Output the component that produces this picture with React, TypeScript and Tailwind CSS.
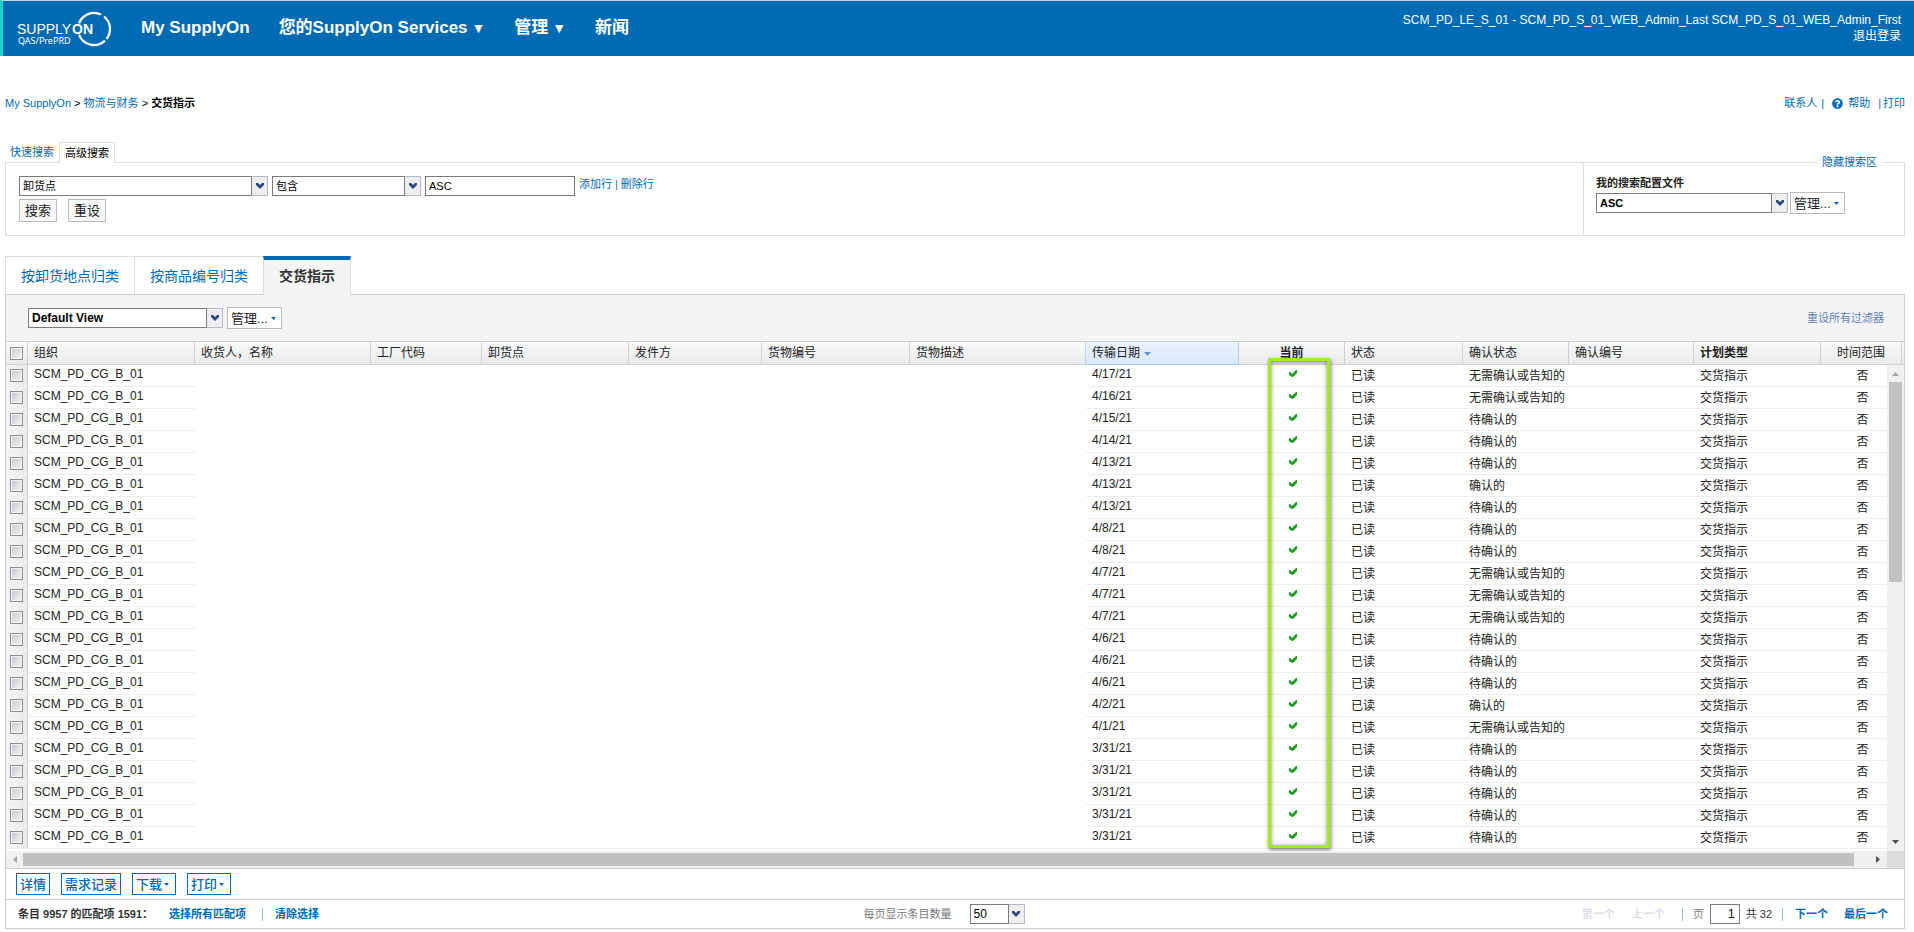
import { ReactNode } from "react";
import { FaQuestionCircle } from "react-icons/fa";

const columns = [
    { label: "组织", width: "w-[167px]" },
    { label: "收货人，名称", width: "w-[176px]" },
    { label: "工厂代码", width: "w-[111px]" },
    { label: "卸货点", width: "w-[147px]" },
    { label: "发件方", width: "w-[133px]" },
    { label: "货物编号", width: "w-[148px]" },
    { label: "货物描述", width: "" },
    { label: "传输日期", width: "w-[153px]", sorted: true },
    { label: "当前", width: "w-[106px]", center: true, bold: true },
    { label: "状态", width: "w-[118px]" },
    { label: "确认状态", width: "w-[106px]" },
    { label: "确认编号", width: "w-[125px]" },
    { label: "计划类型", width: "w-[127px]", bold: true },
    { label: "时间范围", width: "w-[81px]", center: true },
];

const NONE = "无需确认或告知的";
const PENDING = "待确认的";
const DONE = "确认的";

const rows = [
    ["4/17/21", NONE],
    ["4/16/21", NONE],
    ["4/15/21", PENDING],
    ["4/14/21", PENDING],
    ["4/13/21", PENDING],
    ["4/13/21", DONE],
    ["4/13/21", PENDING],
    ["4/8/21", PENDING],
    ["4/8/21", PENDING],
    ["4/7/21", NONE],
    ["4/7/21", NONE],
    ["4/7/21", NONE],
    ["4/6/21", PENDING],
    ["4/6/21", PENDING],
    ["4/6/21", PENDING],
    ["4/2/21", DONE],
    ["4/1/21", NONE],
    ["3/31/21", PENDING],
    ["3/31/21", PENDING],
    ["3/31/21", PENDING],
    ["3/31/21", PENDING],
    ["3/31/21", PENDING],
];

function Logo() {
    return (
        <svg width="96" height="40" viewBox="0 0 96 40" className="text-white" role="img" aria-label="SupplyOn">
            <g fill="none" stroke="currentColor" strokeWidth="2.200">
                <path d="M62 14.400 A16 16 0 0 1 84 5.600" />
                <path d="M87 7.500 A16 16 0 0 1 89.500 30" />
                <path d="M88 31.600 A16 16 0 0 1 62 25.600" />
            </g>
            <text x="0" y="25" fontSize="14" fill="currentColor">SUPPLY</text>
            <text x="55" y="25" fontSize="14" fontWeight="bold" fill="currentColor">ON</text>
            <text x="1" y="35" fontSize="9" fontFamily="Noto Sans" fill="currentColor">QAS/PrePRD</text>
        </svg>
    );
}

function Combo({ value, label, width, text }: { value: string; label: string; width: string; text: string }) {
    return (
        <div className={`relative h-5 ${width}`}>
            <select
                aria-label={label}
                className={`block h-5 w-full appearance-none border border-[#7a7a7a] bg-white pl-[3px] pr-5 leading-[18px] text-black ${text}`}
            >
                <option>{value}</option>
            </select>
            <span className="pointer-events-none absolute right-0 top-0 flex h-5 w-[17px] items-center justify-center border border-[#b5b8c8] border-l-[#7a7a7a] bg-[#eeeeee]">
                <svg width="8" height="6" viewBox="0 0 8 6" className="text-[#2b4a82]">
                    <path d="M0 0h2l2 2 2-2h2v2L4 6 0 2z" fill="currentColor" />
                </svg>
            </span>
        </div>
    );
}

function Caret({ className }: { className: string }) {
    return (
        <svg width="5" height="3" viewBox="0 0 5 3" className={className}>
            <path d="M0 0h5L2.500 3z" fill="currentColor" />
        </svg>
    );
}

function ManageButton() {
    return (
        <button className="flex h-[22px] w-[55px] items-center border border-[#bbbbbb] bg-white pl-[3px] pt-[2px] text-[13px] leading-[18px] text-[#222222]">
            管理...
            <Caret className="mb-[2px] ml-[3px] text-[#006ab3]" />
        </button>
    );
}

function ActionButton({ children, menu }: { children: ReactNode; menu?: boolean }) {
    return (
        <button className="flex h-[22px] items-center border border-[#006ab3] bg-white px-[3px] pt-[2px] text-[13px] font-medium leading-[18px] text-[#006ab3]">
            {children}
            {menu && <Caret className="mb-[2px] ml-[2px] mr-[3px]" />}
        </button>
    );
}

function Checkbox({ label }: { label: string }) {
    return (
        <input
            type="checkbox"
            aria-label={label}
            className="block size-[13px] appearance-none border border-[#8e8f8f] bg-linear-to-br from-[#c4c8cf] to-[#f6f6f6] shadow-[inset_0_0_0_1px_#f4f4f4]"
        />
    );
}

function Header() {
    return (
        <header className="flex h-14 justify-between border-l-[3px] border-t border-l-[#1fd0cf] border-t-[#c9d3d8] bg-[#006ab3] text-white">
            <div className="flex">
                <a href="#" className="ml-[14px] mt-2"><Logo /></a>
                <nav className="ml-7 mt-[15px] flex gap-[29px] text-[17px] font-bold leading-6">
                    <a href="#">My SupplyOn</a>
                    <a href="#">您的SupplyOn Services<span className="text-sm leading-4"> ▼</span></a>
                    <a href="#">管理<span className="text-sm leading-4"> ▼</span></a>
                    <a href="#">新闻</a>
                </nav>
            </div>
            <div className="mr-[13px] mt-[11px] text-right text-xs leading-4">
                <p>SCM_PD_LE_S_01 - SCM_PD_S_01_WEB_Admin_Last SCM_PD_S_01_WEB_Admin_First</p>
                <a href="#">退出登录</a>
            </div>
        </header>
    );
}

function SearchArea() {
    return (
        <section className="mt-[30px]">
            <div className="flex h-5 items-end text-[11px] leading-5">
                <a href="#" className="w-[54px] pl-[5px] text-[#006ab3]">快速搜索</a>
                <a href="#" className="z-10 -mb-px h-[21px] border border-b-0 border-[#dddddd] bg-white px-[5px] text-black">高级搜索</a>
            </div>
            <div className="relative flex h-[74px] border border-[#dddddd]">
                <a href="#" className="absolute -top-[10px] right-[22px] bg-white px-[5px] text-[11px] leading-[18px] text-[#006ab3]">隐藏搜索区</a>
                <div className="flex-1 pl-[13px] pt-[13px]">
                    <div className="flex items-start gap-1">
                        <Combo label="搜索字段" value="卸货点" width="w-[249px]" text="text-[11px]" />
                        <Combo label="运算符" value="包含" width="w-[149px]" text="text-[11px]" />
                        <input aria-label="搜索值" defaultValue="ASC" className="h-5 w-[150px] border border-[#7a7a7a] px-[3px] text-[11px] text-black" />
                        <div className="flex gap-[3px] text-[11px] leading-4 text-[#006ab3]">
                            <a href="#">添加行</a>
                            <span>|</span>
                            <a href="#">删除行</a>
                        </div>
                    </div>
                    <div className="mt-[3px] flex gap-[11px]">
                        <button className="h-[23px] w-[38px] border border-[#bbbbbb] bg-[#f8f8f8] text-[13px] leading-5 text-[#222222]">搜索</button>
                        <button className="h-[23px] w-[38px] border border-[#bbbbbb] bg-[#f8f8f8] text-[13px] leading-5 text-[#222222]">重设</button>
                    </div>
                </div>
                <div className="w-[321px] border-l border-[#dddddd] pl-3 pt-3">
                    <p className="text-[11px] font-bold leading-4 text-[#222222]">我的搜索配置文件</p>
                    <div className="mt-px flex items-center gap-[2px]">
                        <Combo label="我的搜索配置文件" value="ASC" width="w-[192px]" text="text-[11px] font-bold" />
                        <ManageButton />
                    </div>
                </div>
            </div>
        </section>
    );
}

function Grid() {
    return (
        <div className="relative h-[509px] overflow-hidden">
            <table className="w-full table-fixed border-separate border-spacing-0 text-xs text-[#222222]">
                <thead>
                    <tr className="h-[23px] bg-linear-to-b from-[#f9f9f9] to-[#e8eaec]">
                        <th className="w-[22px] border-b border-r border-[#d0d0d0] p-0 pl-1">
                            <Checkbox label="全选" />
                        </th>
                        {columns.map((col) => (
                            <th
                                key={col.label}
                                className={`h-[23px] whitespace-nowrap border-b border-r px-[6px] py-0 leading-[22px] ${col.width} ${col.center ? "text-center" : "text-left"} ${col.bold ? "font-bold" : "font-normal"} ${col.sorted ? "border-[#aaccf6] bg-linear-to-b from-[#ebf3fd] to-[#d9e8fb]" : "border-[#d0d0d0]"}`}
                            >
                                {col.label}
                                {col.sorted && (
                                    <svg width="7" height="4" viewBox="0 0 7 4" className="ml-1 inline text-[#5d94d1]">
                                        <path d="M0 0h7L3.500 4z" fill="currentColor" />
                                    </svg>
                                )}
                            </th>
                        ))}
                        <th className="w-[2px] border-b border-[#d0d0d0] p-0"></th>
                    </tr>
                </thead>
                <tbody>
                    {rows.map(([date, status], i) => (
                        <tr key={i} className="[&>td]:h-[22px] [&>td]:whitespace-nowrap [&>td]:border-[#ededed] [&>td]:py-0 [&>td]:pl-[6px] [&>td]:pr-0 [&>td]:align-top [&>td]:leading-[19px]">
                            <td className="border-b border-r border-r-[#d0d0d0]! bg-linear-to-r from-[#f7f7f7] to-[#e8eaec] pl-1! align-middle!">
                                <Checkbox label={`选择第 ${i + 1} 行`} />
                            </td>
                            <td className="border-b">SCM_PD_CG_B_01</td>
                            {/* 收货人 to 货物描述 are blank, only the last row closes them with a line */}
                            <td colSpan={6} className={i === rows.length - 1 ? "border-b" : ""}></td>
                            <td className="border-b">{date}</td>
                            <td className="border-b pl-[2px]!">
                                <svg width="8" height="8" viewBox="0 0 8 8" className="mx-auto mt-[5px] text-[#1f9d1f]" role="img" aria-label="是">
                                    <path d="M0 2h1l2 2L7 0h1v3L4 7H3L0 5z" fill="currentColor" />
                                </svg>
                            </td>
                            <td className="border-b pt-[2px]!">已读</td>
                            <td colSpan={2} className="border-b pt-[2px]!">{status}</td>
                            <td className="border-b pt-[2px]!">交货指示</td>
                            <td colSpan={2} className="border-b pt-[2px]! pl-0! text-center">否</td>
                        </tr>
                    ))}
                </tbody>
            </table>

            {/* vertical scrollbar */}
            <div className="absolute bottom-0 right-0 top-[23px] flex w-[17px] flex-col items-center bg-[#f0f0f0]">
                <svg width="17" height="17" viewBox="0 0 17 17" className="shrink-0 text-[#a3a3a3]">
                    <path d="M5 11h7L8.500 7z" fill="currentColor" />
                </svg>
                <div className="h-[200px] w-[13px] bg-[#c1c1c1]"></div>
                <svg width="17" height="17" viewBox="0 0 17 17" className="mt-auto shrink-0 text-[#505050]">
                    <path d="M5 6h7L8.500 10z" fill="currentColor" />
                </svg>
            </div>

            <div className="pointer-events-none absolute bottom-[3px] right-[574px] top-4 w-[62px] border-[3px] border-[#9fee20] shadow-[1px_2px_4px_rgba(0,0,0,0.5),inset_0_1px_4px_rgba(0,0,0,0.5)]"></div>
        </div>
    );
}

function Pager() {
    return (
        <footer className="flex h-[29px] items-center justify-between border-t border-[#cccccc] text-[11px] leading-4">
            <div className="flex flex-1 items-center pl-3 font-bold">
                <span className="w-[151px] text-[#333333]">条目 9957 的匹配项 1591：</span>
                <a href="#" className="text-[#006ab3]">选择所有匹配项</a>
                <span className="ml-4 mr-3 h-[13px] w-px bg-[#99bbe8]"></span>
                <a href="#" className="text-[#006ab3]">清除选择</a>
            </div>
            <div className="flex items-center gap-[18px] pr-[18px] text-[#7a7a7a]">
                每页显示条目数量
                <Combo label="每页显示条目数量" value="50" width="w-[55px]" text="text-xs" />
            </div>
            <div className="flex flex-1 items-center justify-end pr-4">
                <span className="font-bold text-[#e0dbe8]">第一个</span>
                <span className="ml-[17px] font-bold text-[#e0dbe8]">上一个</span>
                <span className="ml-[17px] h-[13px] w-px bg-[#99bbe8]"></span>
                <label className="ml-[10px] flex items-center gap-[6px] text-[#7a7a7a]">
                    页
                    <input defaultValue="1" className="h-5 w-[30px] border border-[#7a7a7a] pr-1 text-right text-xs text-black" />
                </label>
                <span className="ml-[6px] text-[#333333]">共 32</span>
                <span className="ml-[10px] mr-3 h-[13px] w-px bg-[#99bbe8]"></span>
                <a href="#" className="font-bold text-[#006ab3]">下一个</a>
                <a href="#" className="ml-4 font-bold text-[#006ab3]">最后一个</a>
            </div>
        </footer>
    );
}

export default function App() {
    return (
        <div className="min-w-[1700px] bg-white font-['Liberation_Sans','Noto_Sans_CJK_SC',sans-serif]">
            <Header />
            <main className="pl-[5px] pr-[9px]">
                <div className="mt-[38px] flex h-[18px] items-center justify-between text-[11px] leading-[18px] text-[#006ab3]">
                    <p className="text-black">
                        <a href="#" className="text-[#006ab3]">My SupplyOn</a> &gt; <a href="#" className="text-[#006ab3]">物流与财务</a> &gt; <b>交货指示</b>
                    </p>
                    <div className="flex items-center">
                        <a href="#">联系人</a>
                        <span className="ml-1">|</span>
                        <FaQuestionCircle className="ml-2 mr-[5px] size-[11px]" />
                        <a href="#">帮助</a>
                        <span className="ml-2 mr-[2px]">|</span>
                        <a href="#">打印</a>
                    </div>
                </div>

                <SearchArea />

                <nav className="relative z-10 -mb-px mt-5 flex h-[39px] text-sm leading-[38px]">
                    <a href="#" className="mb-px w-[129px] border-l border-t border-[#dddddd] pl-[15px] text-[#006ab3]">按卸货地点归类</a>
                    <a href="#" className="mb-px w-[129px] border-l border-t border-[#dddddd] pl-[15px] text-[#006ab3]">按商品编号归类</a>
                    <a href="#" className="w-[88px] border-l border-r border-t-4 border-[#dddddd] border-t-[#006ab3] bg-[#f4f4f4] pl-[15px] font-bold leading-8 text-[#333333]">交货指示</a>
                </nav>

                <section className="border border-[#cccccc]">
                    <div className="flex h-[47px] items-center justify-between border-b border-[#cccccc] bg-[#f4f4f4] pl-[22px] pr-5">
                        <div className="flex items-center gap-1">
                            <Combo label="视图" value="Default View" width="w-[195px]" text="text-xs font-bold" />
                            <ManageButton />
                        </div>
                        <a href="#" className="text-[11px] leading-4 text-[#6382b5]">重设所有过滤器</a>
                    </div>

                    <Grid />

                    {/* horizontal scrollbar */}
                    <div className="flex h-[17px] items-center bg-[#f0f0f0]">
                        <svg width="17" height="17" viewBox="0 0 17 17" className="text-[#a3a3a3]">
                            <path d="M11 5v7L7 8.500z" fill="currentColor" />
                        </svg>
                        <div className="mr-4 h-[13px] flex-1 bg-[#c1c1c1]"></div>
                        <svg width="17" height="17" viewBox="0 0 17 17" className="text-[#505050]">
                            <path d="M6 5v7l4-3.500z" fill="currentColor" />
                        </svg>
                        <div className="size-[17px] bg-[#dcdcdc]"></div>
                    </div>

                    <div className="flex h-[31px] items-center gap-[11px] border-t border-[#cccccc] pl-[10px]">
                        <ActionButton>详情</ActionButton>
                        <ActionButton>需求记录</ActionButton>
                        <ActionButton menu>下载</ActionButton>
                        <ActionButton menu>打印</ActionButton>
                    </div>
                    <Pager />
                </section>
            </main>
        </div>
    );
}
